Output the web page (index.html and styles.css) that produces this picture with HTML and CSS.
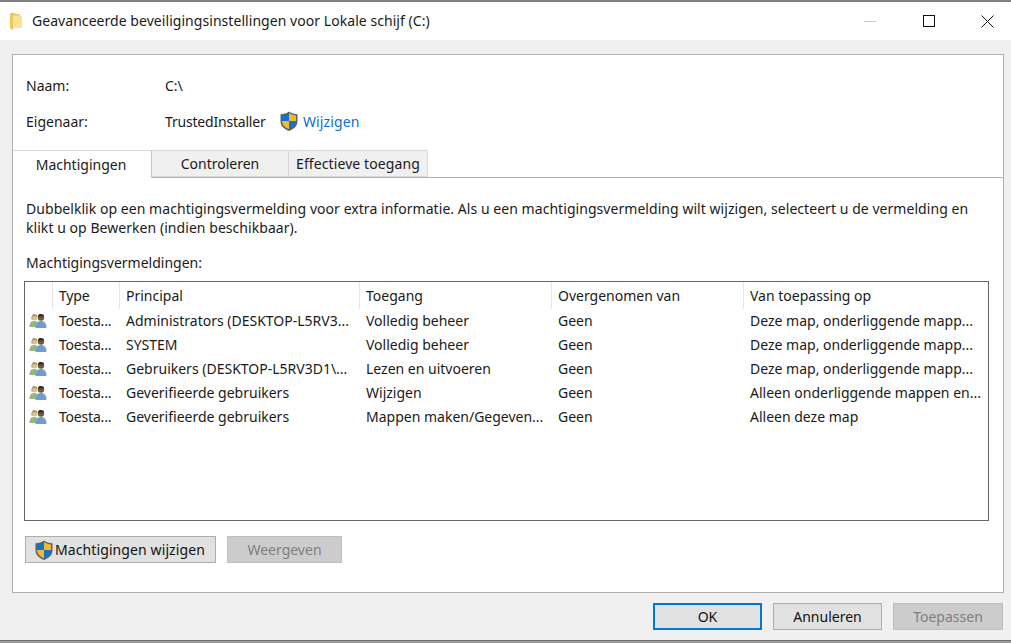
FILE: index.html
```html
<!DOCTYPE html>
<html lang="nl">
<head>
<meta charset="utf-8">
<title>Geavanceerde beveiligingsinstellingen</title>
<link rel="stylesheet" href="styles.css">
</head>
<body>
<svg width="0" height="0" class="defs">
  <defs>
    <symbol id="shield" viewBox="0 0 20 20">
      <path d="M10 .5C7.5 2.3 5 3 1.500 3.200v7C1.500 15 5 18 10 20c5-2 8.500-5 8.500-9.800v-7C15 3 12.500 2.300 10 .5z" fill="#5f6368"/>
      <path d="M10 2C8 3.400 5.500 4.200 3 4.400V10h7z" fill="#1273c9"/>
      <path d="M10 2c2 1.400 4.500 2.200 7 2.400V10h-7z" fill="#f6b82d"/>
      <path d="M3 10h7v8.200C6 16.500 3.200 14 3 10z" fill="#f6b82d"/>
      <path d="M17 10h-7v8.200c4-1.700 6.800-4.200 7-8.200z" fill="#1273c9"/>
    </symbol>
    <symbol id="users" viewBox="0 0 18 16">
      <circle cx="5.500" cy="4.500" r="3" fill="#dcc49a"/>
      <path d="M3 3.500C3 1.500 4.500 1 5.500 1S8.500 2 8 4C7 3 5 3 3 3.500zM2.500 3.500h1v3h-1z" fill="#a89a5f"/>
      <path d="M.5 14c0-4 1.500-6 5-6 2 0 3 1 3.500 2v4z" fill="#94b77c"/>
      <circle cx="12" cy="4.500" r="3.200" fill="#7a5235"/>
      <path d="M9 4C9 1.500 10.500 1 12 1s3 .8 3 3c-1.500-1-4-1-6 0z" fill="#2f2a2a"/>
      <path d="M6.500 15c0-4.500 2-7 5.500-7s5.500 2.500 5.500 7z" fill="#6f9fd0"/>
    </symbol>
  </defs>
</svg>
<div class="window">
  <header class="titlebar">
    <svg class="folder" width="12" height="17" viewBox="0 0 12 17">
      <path d="M0 0h5l1 1h4v12H3v4l-3-1.500z" fill="#eec85f"/>
      <path d="M3 2.500h7l2 1.500v11H3z" fill="#fbe295"/>
    </svg>
    <span class="title">Geavanceerde beveiligingsinstellingen voor Lokale schijf (C:)</span>
    <div class="controls">
      <span class="ctl"><span class="min"></span></span>
      <span class="ctl"><span class="max"></span></span>
      <span class="ctl">
        <svg width="13" height="13" viewBox="0 0 13 13"><path d="M.5.500l12 12M12.500.500l-12 12" stroke="#111" fill="none"/></svg>
      </span>
    </div>
  </header>

  <main class="panel">
    <div class="info">
      <div class="info-row"><span class="info-label">Naam:</span><span>C:\</span></div>
      <div class="info-row"><span class="info-label">Eigenaar:</span><span class="owner">TrustedInstaller</span>
        <svg class="shield-link" width="20" height="20"><use href="#shield"/></svg>
        <a class="link">Wijzigen</a>
      </div>
    </div>

    <div class="tabs">
      <span class="tab tab-active">Machtigingen</span>
      <span class="tab tab-2">Controleren</span>
      <span class="tab tab-3">Effectieve toegang</span>
    </div>

    <div class="pane">
      <p class="intro">Dubbelklik op een machtigingsvermelding voor extra informatie. Als u een machtigingsvermelding wilt wijzigen, selecteert u de vermelding en klikt u op Bewerken (indien beschikbaar).</p>
      <p class="list-label">Machtigingsvermeldingen:</p>

      <div class="list">
        <div class="row head">
          <span class="c0"></span>
          <span class="c1">Type</span>
          <span class="c2">Principal</span>
          <span class="c3">Toegang</span>
          <span class="c4">Overgenomen van</span>
          <span class="c5">Van toepassing op</span>
        </div>
        <div class="row">
          <span class="c0"><svg width="18" height="16"><use href="#users"/></svg></span>
          <span class="c1">Toesta...</span>
          <span class="c2">Administrators (DESKTOP-L5RV3...</span>
          <span class="c3">Volledig beheer</span>
          <span class="c4">Geen</span>
          <span class="c5">Deze map, onderliggende mapp...</span>
        </div>
        <div class="row">
          <span class="c0"><svg width="18" height="16"><use href="#users"/></svg></span>
          <span class="c1">Toesta...</span>
          <span class="c2">SYSTEM</span>
          <span class="c3">Volledig beheer</span>
          <span class="c4">Geen</span>
          <span class="c5">Deze map, onderliggende mapp...</span>
        </div>
        <div class="row">
          <span class="c0"><svg width="18" height="16"><use href="#users"/></svg></span>
          <span class="c1">Toesta...</span>
          <span class="c2">Gebruikers (DESKTOP-L5RV3D1\...</span>
          <span class="c3">Lezen en uitvoeren</span>
          <span class="c4">Geen</span>
          <span class="c5">Deze map, onderliggende mapp...</span>
        </div>
        <div class="row">
          <span class="c0"><svg width="18" height="16"><use href="#users"/></svg></span>
          <span class="c1">Toesta...</span>
          <span class="c2">Geverifieerde gebruikers</span>
          <span class="c3">Wijzigen</span>
          <span class="c4">Geen</span>
          <span class="c5">Alleen onderliggende mappen en...</span>
        </div>
        <div class="row">
          <span class="c0"><svg width="18" height="16"><use href="#users"/></svg></span>
          <span class="c1">Toesta...</span>
          <span class="c2">Geverifieerde gebruikers</span>
          <span class="c3">Mappen maken/Gegeven...</span>
          <span class="c4">Geen</span>
          <span class="c5">Alleen deze map</span>
        </div>
      </div>

      <div class="pane-actions">
        <button class="btn btn-edit"><svg class="btn-icon" width="20" height="20"><use href="#shield"/></svg>Machtigingen wijzigen</button>
        <button class="btn btn-view" disabled>Weergeven</button>
      </div>
    </div>
  </main>

  <footer class="actions">
    <button class="btn btn-dlg btn-ok">OK</button>
    <button class="btn btn-dlg">Annuleren</button>
    <button class="btn btn-dlg" disabled>Toepassen</button>
  </footer>
</div>
<div class="desktop-strip"></div>
</body>
</html>
```

FILE: styles.css
```css
* { box-sizing: border-box; }
html, body { margin: 0; padding: 0; height: 643px; overflow: hidden; }
body {
  font-family: "Noto Sans", "Open Sans", "Liberation Sans", sans-serif;
  font-size: 14px;
  color: #1a1a1a;
  background: #f0f0f0;
  display: flex;
  flex-direction: column;
}
.defs { position: absolute; }
.window {
  height: 641px;
  background: #f0f0f0;
  border-top: 2px solid #7f7f7f;
  border-bottom: 1px solid #6e6e6e;
  display: flex;
  flex-direction: column;
}
.desktop-strip { height: 2px; background: #9a9a9a; }
.titlebar {
  height: 38px;
  background: #fff;
  display: flex;
  align-items: center;
  padding-left: 10px;
  flex: none;
}
.folder { margin-right: 10px; }
.title { flex: 1; letter-spacing: 0.05px; padding-bottom: 2px; }
.controls { display: flex; margin-right: -6px; }
.ctl {
  width: 59px;
  height: 38px;
  display: flex;
  align-items: center;
  justify-content: center;
}
.min { width: 12px; height: 1px; background: #c8c8c8; }
.max { width: 12px; height: 12px; border: 1px solid #111; }
.panel {
  margin: 14px 7px 0 12px;
  height: 539px;
  background: #fff;
  border: 1px solid #b0b0b0;
  display: flex;
  flex-direction: column;
  flex: none;
}
.info { padding: 12px 0 0 13px; height: 95px; }
.info-row { height: 36px; display: flex; align-items: center; }
.info-label { width: 139px; }
.owner { width: 100px; letter-spacing: -0.2px; white-space: nowrap; }
.shield-link { margin: 0 4px 0 14px; }
.link { color: #0a6fd6; letter-spacing: 0.1px; }
.tabs { display: flex; height: 28px; border-bottom: 1px solid #b0b0b0; }
.tab {
  display: flex;
  align-items: center;
  justify-content: center;
  height: 27px;
  background: #f0f0f0;
  border: 1px solid #d9d9d9;
  border-left: 0;
}
.tab-active {
  width: 139px;
  height: 28px;
  background: #fff;
  border-right: 1px solid #c4c4c4;
  border-bottom: 0;
  border-top: 1px solid #d9d9d9;
  padding-right: 2px;
}
.tab-2 { width: 137px; }
.tab-3 { width: 139px; letter-spacing: 0.1px; }
.pane { padding: 0 13px; flex: 1; display: flex; flex-direction: column; }
.intro { margin: 21px 0 0; line-height: 19px; letter-spacing: 0.05px; max-width: 950px; }
.list-label { margin: 16px 0 0; line-height: 19px; }
.list {
  margin-top: 9px;
  margin-left: -2px;
  width: 965px;
  height: 240px;
  border: 1px solid #666;
  background: #fff;
}
.row { display: flex; height: 24px; line-height: 24px; white-space: nowrap; }
.head { height: 27px; line-height: 28px; }
.row span { overflow: hidden; flex: none; padding-left: 6px; }
.head span { border-right: 1px solid #e5e5e5; }
.c0 { width: 28px; padding-left: 4px !important; }
.c0 svg { vertical-align: middle; margin-top: -3px; }
.c1 { width: 67px; letter-spacing: -0.2px; }
.c2 { width: 240px; }
.c3 { width: 192px; }
.c4 { width: 192px; }
.c5 { width: 244px; }
.head .c5 { border-right: 0; }
.pane-actions { display: flex; gap: 11px; margin: 15px 0 0 -1px; }
.btn {
  font: inherit;
  height: 27px;
  color: #111;
  background: #e1e1e1;
  border: 1px solid #adadad;
  padding: 0;
  display: flex;
  align-items: center;
  justify-content: center;
}
.btn:disabled { background: #cccccc; color: #7f7f7f; border-color: #bfbfbf; }
.btn-edit { width: 191px; justify-content: flex-start; padding-left: 8px; letter-spacing: 0.1px; }
.btn-icon { margin-right: 1px; }
.btn-view { width: 115px; }
.actions {
  flex: 1;
  display: flex;
  justify-content: flex-end;
  gap: 11px;
  padding: 10px 8px 0 0;
}
.btn-dlg { width: 109px; }
.btn-dlg:last-child { width: 110px; }
.btn-ok { border: 2px solid #0078d7; }
```
